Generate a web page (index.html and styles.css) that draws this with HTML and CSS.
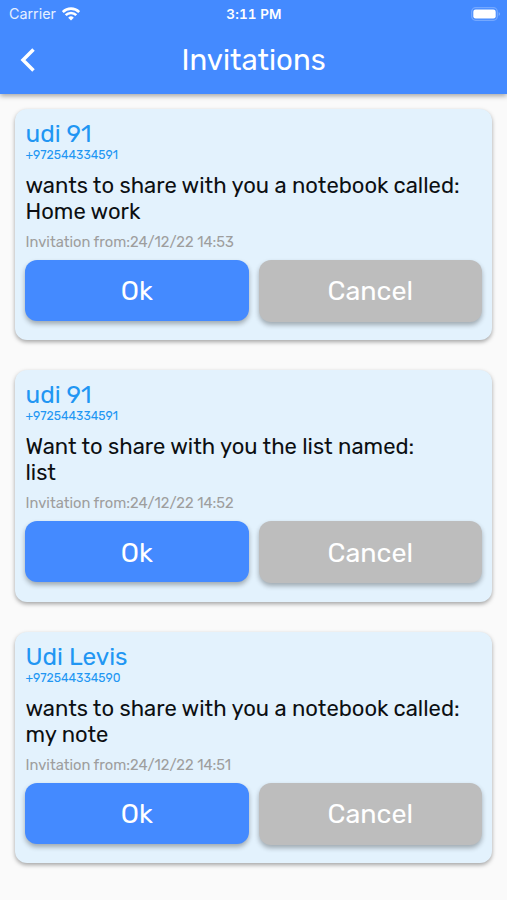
FILE: index.html
```html
<!DOCTYPE html>
<html lang="en">
<head>
<meta charset="utf-8">
<title>Invitations</title>
<link rel="stylesheet" href="styles.css">
</head>
<body>
<header class="top">
  <div class="status">
    <div class="carrier"><span>Carrier</span>
      <svg class="wifi" viewBox="0 0 18 14"><g fill="none" stroke="#fff" stroke-width="2.6"><path d="M.8 5a11.700 11.700 0 0 1 16.400 0"/><path d="M3.700 8.200a7.500 7.500 0 0 1 10.600 0"/></g><path d="M9 13.600 6.200 10.700a4 4 0 0 1 5.600 0z" fill="#fff"/></svg>
    </div>
    <div class="time">3:11 PM</div>
    <svg class="battery" viewBox="0 0 30 14"><rect x=".7" y=".7" width="25.600" height="12.600" rx="4" fill="none" stroke="#74a8ff" stroke-width="1.300"/><rect x="2.300" y="2.500" width="22.400" height="9" rx="2.300" fill="#fff"/><path d="M27.700 5q2.600 2 0 4z" fill="#83b2ff"/></svg>
  </div>
  <div class="bar">
    <svg class="back" viewBox="0 0 16 24"><path d="M13.500 1.500 3 12l10.500 10.500" fill="none" stroke="#fff" stroke-width="3.500"/></svg>
    <h1>Invitations</h1>
  </div>
</header>
<main>
  <section class="card">
    <h2>udi 91</h2><div class="phone">+972544334591</div>
    <p>wants to share with you a notebook called:<br>Home work</p>
    <div class="date">Invitation from:24/12/22 14:53</div>
    <div class="actions"><button class="ok">Ok</button><button class="cancel">Cancel</button></div>
  </section>
  <section class="card">
    <h2>udi 91</h2><div class="phone">+972544334591</div>
    <p>Want to share with you the list named:<br>list</p>
    <div class="date">Invitation from:24/12/22 14:52</div>
    <div class="actions"><button class="ok">Ok</button><button class="cancel">Cancel</button></div>
  </section>
  <section class="card">
    <h2>Udi Levis</h2><div class="phone">+972544334590</div>
    <p>wants to share with you a notebook called:<br>my note</p>
    <div class="date">Invitation from:24/12/22 14:51</div>
    <div class="actions"><button class="ok">Ok</button><button class="cancel">Cancel</button></div>
  </section>
</main>
</body>
</html>
```
FILE: styles.css
```css
* { box-sizing: border-box; }
body { margin: 0; height: 900px; overflow: hidden; background: #fafafa; font-family: Rubik, Roboto, sans-serif; color: #0c0f12; }
.top { height: 93.5px; background: #448aff; color: #fff; box-shadow: 0 2px 5px rgba(0,0,0,.35); }
.status { height: 27px; padding: 0 6px 0 9px; display: grid; grid-template-columns: 1fr auto 1fr; align-items: center; font: 14.3px Inter, sans-serif; }
.carrier { display: flex; align-items: center; gap: 6px; color: #e6efff; }
.wifi { width: 18px; height: 14px; }
.time { margin-right: 2px; font-weight: 600; font-size: 13.5px; letter-spacing: .1px; font-variant-numeric: tabular-nums; }
.battery { width: 30px; height: 14px; justify-self: end; }
.bar { height: 65px; padding: 0 20px; display: grid; grid-template-columns: 16px 1fr 16px; align-items: center; }
.back { width: 16px; height: 24px; }
h1 { margin: 0; text-align: center; font-size: 29.3px; font-weight: 400; transform: translateY(-.5px); }
main { padding: 15px; display: grid; gap: 30px; }
.card { height: 231.5px; padding: 10px 10px 0; border-radius: 12px; background: #e3f2fd; box-shadow: 0 2px 4px rgba(0,0,0,.35); }
h2, .phone, p, .date { padding-left: .5px; }
h2 { margin: 0; height: 30px; font-size: 24.4px; line-height: 30px; font-weight: 400; color: #2196f3; }
.phone { font-size: 12.2px; line-height: 12px; color: #2196f3; }
p { margin: 12px 0 0; font-size: 22px; line-height: 26px; white-space: nowrap; }
.date { margin-top: 8px; height: 18px; font-size: 14.7px; line-height: 18px; color: #9e9e9e; }
.actions { margin-top: 9.2px; display: grid; grid-template-columns: 1fr 1fr; gap: 10px; }
button { height: 61px; padding: 2px 6px 0; border: 0; border-radius: 12px; color: #fff; font: 26.9px Rubik, Roboto, sans-serif; box-shadow: 0 3px 5px rgba(0,0,0,.3); }
.ok { background: #448aff; }
.cancel { height: 62.3px; padding: 1px 6px 0; background: #bdbdbd; }
```
